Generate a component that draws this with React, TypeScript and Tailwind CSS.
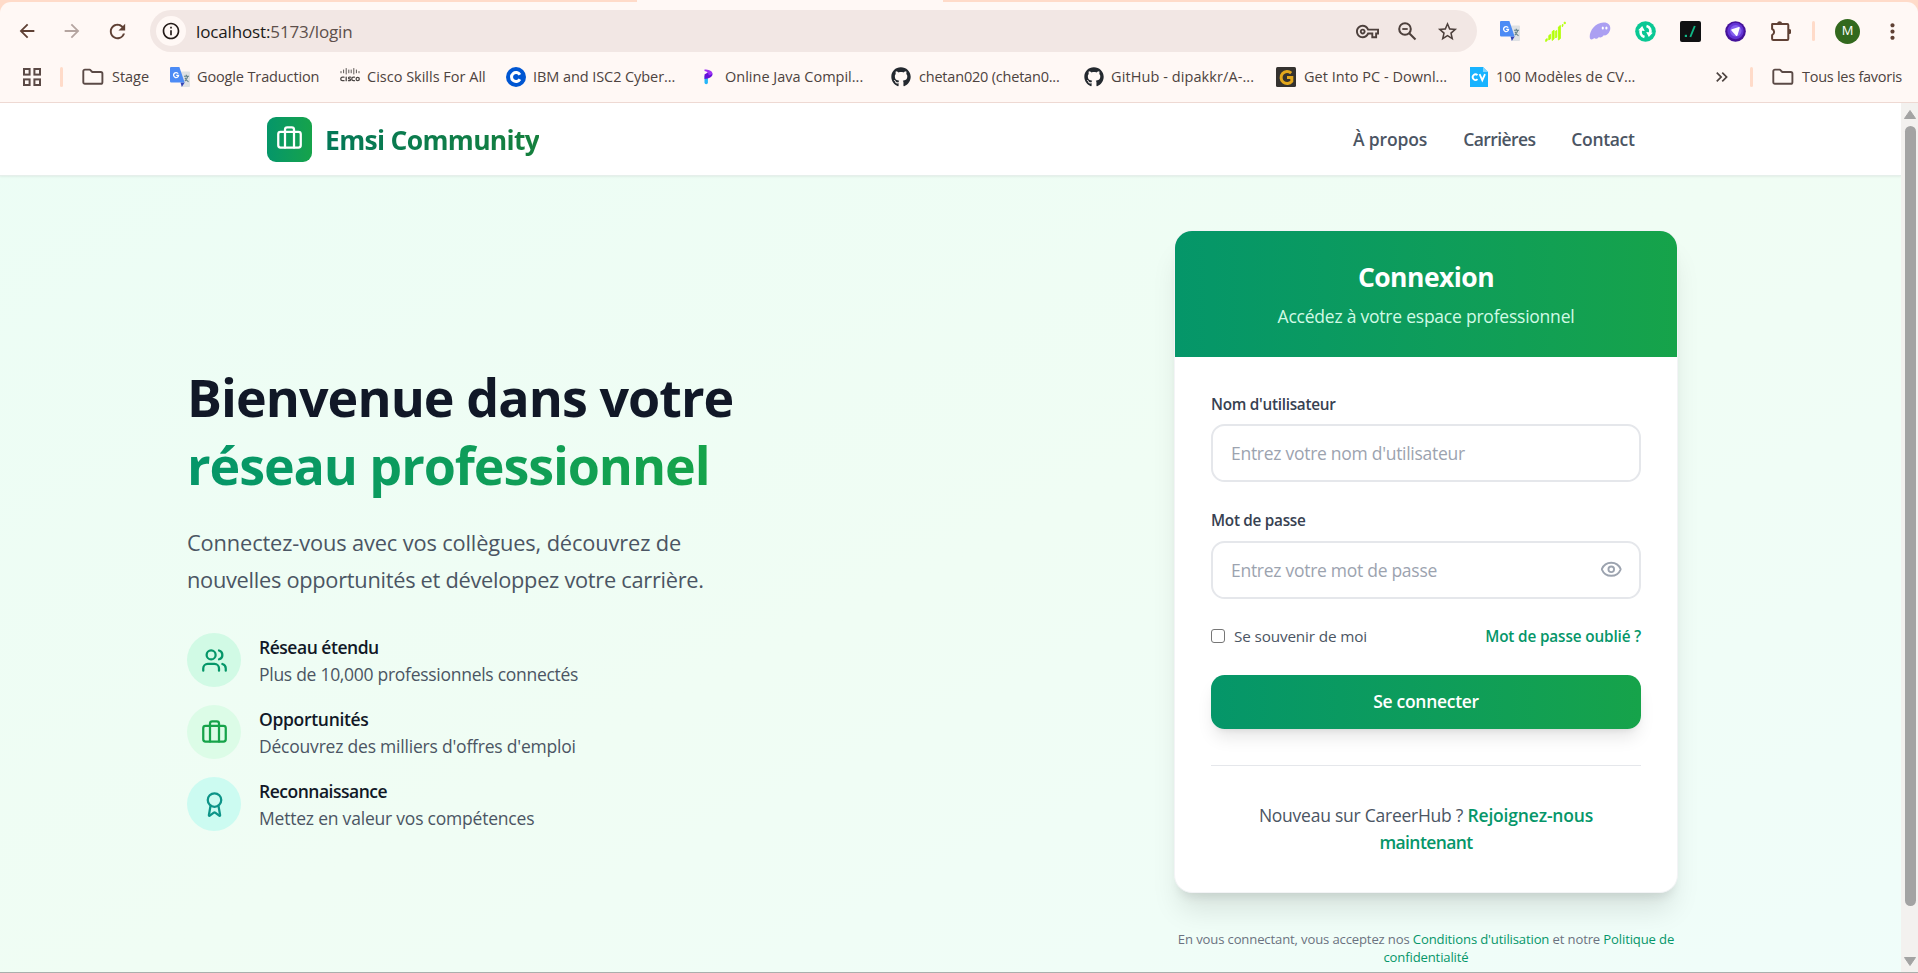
import type { ReactNode } from "react";
import { Award, Eye, Users } from "lucide-react";
import { FaGithub } from "react-icons/fa";
import {
  MdArrowBack,
  MdArrowForward,
  MdInfoOutline,
  MdKeyboardDoubleArrowRight,
  MdMoreVert,
  MdOutlineVpnKey,
  MdRefresh,
  MdStarOutline,
} from "react-icons/md";

const BriefcaseIcon = ({ className }: { className: string }) => (
  <svg viewBox="0 0 24 24" fill="none" stroke="currentColor" strokeWidth="2" strokeLinecap="round" strokeLinejoin="round" className={className}>
    <rect x="2" y="6" width="20" height="14" rx="2" />
    <path d="M16 20V4a2 2 0 0 0-2-2h-4a2 2 0 0 0-2 2v16" />
  </svg>
);

const FolderIcon = () => (
  <svg viewBox="0 0 22 18" className="h-[18px] w-[22px]" fill="none" stroke="#5b4a46" strokeWidth="1.9" strokeLinejoin="round">
    <path d="M1.3 14.2V3.2a1.6 1.6 0 0 1 1.6-1.6h5l2.4 2.4h8.5a1.6 1.6 0 0 1 1.6 1.6v8.600a1.600 1.600 0 0 1-1.600 1.600H2.900a1.600 1.600 0 0 1-1.600-1.600z" />
  </svg>
);

const AppsIcon = () => (
  <svg viewBox="0 0 18 18" className="size-[18px]" fill="none" stroke="#5b4a46" strokeWidth="2">
    <rect x="1" y="1" width="5.6" height="5.6" />
    <rect x="11.4" y="1" width="5.6" height="5.6" />
    <rect x="1" y="11.4" width="5.6" height="5.6" />
    <rect x="11.4" y="11.4" width="5.6" height="5.6" />
  </svg>
);

const ZoomOutIcon = () => (
  <svg viewBox="0 0 20 22" className="mt-0.5 h-[22px] w-5" fill="none" stroke="#4d403c" strokeWidth="2">
    <circle cx="8" cy="8" r="5.800" />
    <path d="M12.200 12.200l6.300 6.300" />
    <path d="M5.300 8h5.400" strokeWidth="1.800" />
  </svg>
);

const TranslateIcon = () => (
  <svg viewBox="0 0 20 20" className="size-5">
    <path d="M8 4.500h11a1 1 0 0 1 1 1V19a1 1 0 0 1-1 1h-7z" fill="#dfe1e3" />
    <path d="M10.500 15.500h4.200L11.800 20z" fill="#3344b4" />
    <path d="M1 0h8.400l5.200 15.500H1.200A1.200 1.200 0 0 1 0 14.300V1.200A1.200 1.200 0 0 1 1 0z" fill="#4c8bf5" />
    <path d="M8.200 6.700A2.500 2.500 0 1 0 8.600 8.300H6.200" fill="none" stroke="#fff" strokeWidth="1.300" />
    <path d="M14 9.200h5M16.300 7.800v1.400M17.800 9.200c-.5 2.300-1.700 3.900-3 5M15 10.800c.7 1.800 1.900 3 3.500 4" fill="none" stroke="#5f7f86" strokeWidth="1.100" />
  </svg>
);

const CiscoIcon = () => (
  <svg viewBox="0 0 20 20" className="size-5" fill="none" stroke="#4b4644" strokeLinecap="round">
    <path d="M1 4.500v1.300M3.600 3v2.800M6.200 1.500v5.500M8.800 3v2.800M11.200 3v2.800M13.800 1.500v5.500M16.400 3v2.800M19 4.500v1.300" strokeWidth="0.900" />
    <path d="M4 10.200H2.500a1.700 1.700 0 0 0 0 3.500H4M6.200 10.200v3.500M10.600 10.200H9.200c-.9 0-.9 1.700 0 1.700h.6c.9 0 .9 1.800 0 1.800H8.500M14.500 10.200h-1a1.700 1.700 0 0 0 0 3.500h1" strokeWidth="1.300" />
    <circle cx="17.700" cy="12" r="1.600" strokeWidth="1.300" />
  </svg>
);

const CourseraIcon = () => (
  <svg viewBox="0 0 20 20" className="size-5">
    <circle cx="10" cy="10" r="10" fill="#0056d2" />
    <path d="M13.900 12.300a4.500 4.500 0 1 1 0-4.600" fill="none" stroke="#fff" strokeWidth="3" />
  </svg>
);

const CompilerIcon = () => (
  <svg viewBox="0 0 20 20" className="size-5">
    <path d="M6.500 9l3.400-1.500v8.100a1.600 1.600 0 0 1-3.400 0z" fill="#25b5f8" />
    <path d="M6.500 7.500l4-2.500 4 1.700c0 3.500-3.400 4.800-8 5.300z" fill="#6610d8" />
    <path d="M6.500 2.500c3.800 0 8 1 8 4.500l-3.700 1.500c0-2.200-1.600-4-4.300-4.500z" fill="#a033f5" />
  </svg>
);

const GetIntoIcon = () => (
  <svg viewBox="0 0 20 20" className="size-5">
    <rect width="20" height="20" rx="1.500" fill="#35322f" />
    <path d="M15.200 6.200A6 6 0 1 0 15.800 14.300v-3.900h-4.800" fill="none" stroke="#e3a71c" strokeWidth="3" />
  </svg>
);

const CvIcon = () => (
  <svg viewBox="0 0 20 20" className="size-5">
    <path d="M1 0h13l5 5v15H1z" fill="#18b3ff" />
    <path d="M14 0l5 5h-5z" fill="#7fd6ff" />
    <path d="M8.500 8.200a2.800 2.800 0 1 0 0 4M10.600 7.200l2.700 6 2.700-6" fill="none" stroke="#fff" strokeWidth="1.800" />
  </svg>
);

const ChartExtension = () => (
  <svg viewBox="0 0 21 21" className="size-[21px]" fill="#b4ff0a" stroke="#b4ff0a" strokeLinejoin="round">
    <path d="M.7 18.600l1.500-1v2l-1.500 1z" strokeWidth="0.900" />
    <path d="M3.800 14.500l1.800-1.200v4.500L3.800 19z" strokeWidth="0.900" />
    <path d="M7.200 10.500l1.900-1.200v8.500l-1.900 1.700z" strokeWidth="0.900" />
    <path d="M10.700 10l1-.5v6.500l-1 1z" strokeWidth="0.900" />
    <path d="M13.400 6l2-1.600v13.100l-2 1.500z" strokeWidth="0.900" />
    <path d="M17.200 3.800l.8-.6v2l-.8.6z" strokeWidth="0.800" />
    <circle cx="19.800" cy="1.900" r="1" strokeWidth="0.500" />
  </svg>
);

const GhostExtension = () => (
  <svg viewBox="0 0 22 18" className="h-[18px] w-[22px]">
    <path d="M1 16.500C-.6 11 5 1 14.500.600 20.500.400 22.400 5 20.700 9c-1.300 3.300-4.200 5-6 4.300-1.300 2-3.400 2.800-4.700 1.600-1.700 2.200-4 2.300-4.700 1.100-1.300 1.400-3.500 2-4.300.5z" fill="#ab9ff2" />
    <ellipse cx="13.800" cy="6" rx="1.100" ry="1.600" fill="#fff" />
    <ellipse cx="17.400" cy="6" rx="1.100" ry="1.600" fill="#fff" />
  </svg>
);

const SyncExtension = () => (
  <svg viewBox="0 0 21 21" className="size-[21px]">
    <circle cx="10.500" cy="10.500" r="10.300" fill="#0ac894" />
    <path d="M9.500 16C6 15 4.800 12 6 8.500M11.500 5c3.500 1 4.700 4 3.500 7.500" fill="none" stroke="#fff" strokeWidth="2.600" />
    <path d="M3.200 9.300L7.200 5l2.600 5zM17.800 11.700l-4 4.300-2.600-5z" fill="#fff" />
  </svg>
);

const SlashExtension = () => (
  <svg viewBox="0 0 21 21" className="size-[21px]">
    <rect width="21" height="21" rx="2" fill="#101112" />
    <rect x="4.800" y="13.800" width="2.200" height="2.200" fill="#11b886" />
    <path d="M10.300 16l4.500-11" stroke="#11b886" strokeWidth="1.900" />
  </svg>
);

const PurpleExtension = () => (
  <svg viewBox="0 0 21 21" className="size-[21px]">
    <circle cx="10.500" cy="10.500" r="10.300" fill="#451299" />
    <circle cx="10.500" cy="10" r="8.200" fill="#6334d4" />
    <circle cx="10.800" cy="9.800" r="5.800" fill="#8560ee" />
    <path d="M6.800 8.200l7-2.100c.8-.2 1 .2.900.9l-2.200 7.200c-.3.900-1.200.9-1.700.2L6.400 9.500c-.4-.6-.2-1.100.4-1.300z" fill="#fff" />
  </svg>
);

const PuzzleIcon = () => (
  <svg viewBox="0 0 22 22" className="size-[22px]">
    <path d="M3.300 4h15a1 1 0 0 1 1 1v14a1 1 0 0 1-1 1h-14a1.200 1.200 0 0 1-1.200-1.200v-3.600a3.400 3.400 0 0 0 0-6.200V4.200z" fill="none" stroke="#5f4034" strokeWidth="2" strokeLinejoin="round" />
    <path d="M8 3.300a2.700 2.700 0 0 1 5.200 0zM19.800 8.900a2.600 2.600 0 0 1 0 5.200z" fill="#5f4034" />
  </svg>
);

const extensions = [TranslateIcon, ChartExtension, GhostExtension, SyncExtension, SlashExtension, PurpleExtension, PuzzleIcon];

const bookmarks: { label: string; icon: ReactNode; box: string; text: string }[] = [
  { label: "Stage", icon: <FolderIcon />, box: "w-[88px] gap-2", text: "tracking-[-0.003em]" },
  { label: "Google Traduction", icon: <TranslateIcon />, box: "w-[170px] gap-[7px]", text: "tracking-[-0.009em]" },
  { label: "Cisco Skills For All", icon: <CiscoIcon />, box: "w-[166px] gap-[7px]", text: "tracking-[0em]" },
  { label: "IBM and ISC2 Cyber...", icon: <CourseraIcon />, box: "w-[192px] gap-[7px]", text: "tracking-[-0.005em]" },
  { label: "Online Java Compil...", icon: <CompilerIcon />, box: "w-[193px] gap-[7px]", text: "tracking-[0em]" },
  { label: "chetan020 (chetan0...", icon: <FaGithub className="size-5 text-[#24292f]" />, box: "w-[193px] gap-2", text: "tracking-[-0.014em]" },
  { label: "GitHub - dipakkr/A-...", icon: <FaGithub className="size-5 text-[#24292f]" />, box: "w-[192px] gap-[7px]", text: "tracking-[0.006em]" },
  { label: "Get Into PC - Downl...", icon: <GetIntoIcon />, box: "w-[193px] gap-2", text: "tracking-[0.001em]" },
  { label: "100 Modèles de CV...", icon: <CvIcon />, box: "w-[247px] gap-[7px]", text: "tracking-[-0.002em]" },
];

function BrowserChrome() {
  return (
    <div className="relative h-[103px] shrink-0 bg-[#ffdbc9]">
      <div className="absolute left-[637px] top-0 h-[2px] w-[306px] bg-[#fff8f5]" />
      <div className="h-[2px]" />
      <div className="h-[101px] rounded-t-[11px] border-b border-[#eed9d3] bg-[#fff8f5] pt-2">
        <div className="flex h-[42px] items-center pl-[4.5px] text-[#5f4034]">
          <div className="flex w-[45px] justify-center"><MdArrowBack className="size-[22px]" /></div>
          <div className="flex w-[45px] justify-center text-[#b5a5a0]"><MdArrowForward className="size-[22px]" /></div>
          <div className="flex w-[45px] justify-center"><MdRefresh className="size-[23px]" /></div>
          <div className="ml-[10.5px] flex h-[42px] w-[1327px] items-center rounded-full bg-[#f2e7e4] pl-1.5 pr-2.5 text-[#4d403c]">
            <div className="flex size-[30px] items-center justify-center rounded-full bg-[#fff8f5]">
              <MdInfoOutline className="size-5 text-[#231a17]" />
            </div>
            <div className="ml-2.5 mt-0.5 flex-1 text-[17px] leading-6 tracking-[-0.008em] text-[#5d4f4b]">
              <span className="text-[#201a18]">localhost:</span>5173/login
            </div>
            <div className="flex w-10 justify-center"><MdOutlineVpnKey className="size-[23px]" /></div>
            <div className="flex w-10 justify-center"><ZoomOutIcon /></div>
            <div className="flex w-10 justify-center"><MdStarOutline className="size-[23px]" /></div>
          </div>
          <div className="ml-[10.5px] flex">
            {extensions.map((Icon, i) => (
              <div key={i} className="flex w-[45px] items-center justify-center"><Icon /></div>
            ))}
          </div>
          <div className="ml-[9.5px] h-5 w-[3px] rounded-full bg-[#ffdbc9]" />
          <div className="ml-5 flex size-[25px] items-center justify-center rounded-full bg-[#33691e] text-[13px] text-white">M</div>
          <div className="ml-[9.5px] flex w-[45px] justify-center"><MdMoreVert className="size-[25px]" /></div>
        </div>
        <div className="flex h-[50px] items-center pl-[23px] text-[14.5px] leading-5 text-[#4d4340]">
          <AppsIcon />
          <div className="ml-[19px] mr-[19px] h-5 w-[3px] rounded-full bg-[#ffdbc9]" />
          {bookmarks.map((b) => (
            <div key={b.label} className={`flex shrink-0 items-center whitespace-nowrap ${b.box}`}>
              {b.icon}
              <span className={`-mt-px ${b.text}`}>{b.label}</span>
            </div>
          ))}
          <MdKeyboardDoubleArrowRight className="-ml-[4px] size-[20px]" />
          <div className="ml-[18px] h-5 w-[3px] rounded-full bg-[#ffdbc9]" />
          <div className="ml-[19px] flex items-center gap-[8px] whitespace-nowrap">
            <FolderIcon />
            <span className="-mt-px tracking-[-0.018em]">Tous les favoris</span>
          </div>
        </div>
      </div>
    </div>
  );
}

const features = [
  { title: "Réseau étendu", text: "Plus de 10,000 professionnels connectés", icon: <Users className="size-[27px]" />, tone: "bg-[#d1fae5] text-[#059669]", titleTracking: "tracking-[-0.027em]", textTracking: "tracking-[-0.016em]" },
  { title: "Opportunités", text: "Découvrez des milliers d'offres d'emploi", icon: <BriefcaseIcon className="size-[27px]" />, tone: "bg-[#dcfce7] text-[#16a34a]", titleTracking: "tracking-[-0.018em]", textTracking: "tracking-[-0.012em]" },
  { title: "Reconnaissance", text: "Mettez en valeur vos compétences", icon: <Award className="size-[27px]" />, tone: "bg-[#ccfbf1] text-[#0d9488]", titleTracking: "tracking-[-0.028em]", textTracking: "tracking-[-0.012em]" },
];

function Hero() {
  return (
    <section className="w-[560px] pt-[187px]">
      <h1 className="whitespace-nowrap text-[52px] font-bold leading-[68px] tracking-[-0.018em] text-[#111827]">
        Bienvenue dans votre
        <span className="block w-fit bg-gradient-to-r from-[#059669] to-[#16a34a] bg-clip-text tracking-[-0.021em] text-transparent">
          réseau professionnel
        </span>
      </h1>
      <p className="mt-[26px] whitespace-nowrap text-[21.8px] leading-[36.5px] tracking-[-0.013em] text-[#4b5563]">
        <span className="tracking-[-0.006em]">Connectez-vous avec vos collègues, découvrez de</span>
        <br />
        nouvelles opportunités et développez votre carrière.
      </p>
      <ul className="mt-[35px] flex flex-col gap-[18px]">
        {features.map((f) => (
          <li key={f.title} className="flex h-[54px] items-center gap-[18px]">
            <div className={`flex size-[54px] items-center justify-center rounded-full ${f.tone}`}>{f.icon}</div>
            <div className="pt-px text-[17.5px] leading-[27px]">
              <h3 className={`font-semibold text-[#111827] ${f.titleTracking}`}>{f.title}</h3>
              <p className={`text-[#4b5563] ${f.textTracking}`}>{f.text}</p>
            </div>
          </li>
        ))}
      </ul>
    </section>
  );
}

const inputClass =
  "block h-[58px] w-full rounded-[13.5px] border-2 border-[#e5e7eb] bg-white px-[18px] text-[17.5px] tracking-[-0.016em] placeholder:text-[#9ca3af] outline-none";
const labelClass = "mb-[9px] block text-[15.3px] font-semibold leading-[22.5px] tracking-[-0.018em] text-[#374151]";

function LoginCard() {
  return (
    <section className="w-[504px] pt-[54px]">
      <div className="overflow-hidden rounded-[18px] border border-[#f3f4f6] bg-white shadow-[0_22.5px_28px_-5.6px_rgba(0,0,0,0.1),0_9px_11px_-6.75px_rgba(0,0,0,0.1)]">
        <div className="bg-gradient-to-r from-[#059669] to-[#16a34a] pb-[27px] pt-7 text-center">
          <h2 className="text-[26.500px] font-bold leading-[36px] tracking-[-0.02em] text-white">Connexion</h2>
          <p className="mt-2 text-[17.5px] leading-[27px] tracking-[-0.013em] text-[#d1fae5]">Accédez à votre espace professionnel</p>
        </div>
        <form className="px-9 pb-9 pt-[35.5px]">
          <label htmlFor="user" className={labelClass}>Nom d'utilisateur</label>
          <input id="user" placeholder="Entrez votre nom d'utilisateur" className={inputClass} />
          <label htmlFor="pass" className={`mt-[27px] ${labelClass}`}>Mot de passe</label>
          <div className="relative">
            <input id="pass" type="password" placeholder="Entrez votre mot de passe" className={inputClass} />
            <Eye className="absolute right-[18.5px] top-[17.5px] size-[22.5px] text-[#9ca3af]" />
          </div>
          <div className="mt-[26.5px] flex h-[22.5px] items-center justify-between text-[15.3px]">
            <label className="flex items-center gap-[9px] tracking-[-0.01em] text-[#4b5563]">
              <input type="checkbox" className="size-[14px] appearance-none rounded-[3px] border border-[#767676] bg-white" />
              Se souvenir de moi
            </label>
            <a className="font-semibold tracking-[-0.009em] text-[#059669]">Mot de passe oublié ?</a>
          </div>
          <button type="button" className="mt-[27px] h-[54px] w-full rounded-[13.5px] bg-gradient-to-r from-[#059669] to-[#16a34a] text-[17.5px] font-semibold tracking-[-0.017em] text-white shadow-[0_11px_17px_-3px_rgba(0,0,0,0.1),0_4px_7px_-4px_rgba(0,0,0,0.1)]">
            Se connecter
          </button>
          <div className="mt-9 border-t border-[#e5e7eb] pt-9 text-center text-[17.5px] leading-[27px] tracking-[-0.014em] text-[#4b5563]">
            Nouveau sur CareerHub ?{" "}
            <a className="font-semibold tracking-[-0.01em] text-[#059669]">Rejoignez-nous</a>
            <br />
            <a className="font-semibold tracking-[-0.035em] text-[#059669]">maintenant</a>
          </div>
        </form>
      </div>
      <p className="mt-[37px] whitespace-nowrap text-center text-[13.1px] leading-[18px] tracking-[-0.011em] text-[#6b7280]">
        En vous connectant, vous acceptez nos <a className="text-[#059669]">Conditions d'utilisation</a> et notre{" "}
        <a className="text-[#059669]">Politique de</a>
        <br />
        <a className="text-[#059669]">confidentialité</a>
      </p>
    </section>
  );
}

function Scrollbar() {
  return (
    <div className="flex w-[17px] flex-col items-center bg-[#f3f1ef] pl-px pt-[7px]">
      <svg viewBox="0 0 12 9" className="h-[9px] w-3"><path d="M6 .5L11.500 8.500H.5z" fill="#a3a3a3" stroke="#a3a3a3" strokeLinejoin="round" /></svg>
      <div className="mt-[7px] h-[780px] w-[11px] rounded-full bg-[#a3a3a3]" />
      <svg viewBox="0 0 12 9" className="mt-[51px] h-[9px] w-3"><path d="M6 8.500L11.500.5H.5z" fill="#a3a3a3" stroke="#a3a3a3" strokeLinejoin="round" /></svg>
    </div>
  );
}

export default function App() {
  return (
    <div className="flex h-[973px] w-[1918px] flex-col overflow-hidden font-['Open_Sans','Noto_Sans',sans-serif]">
      <BrowserChrome />
      <div className="flex h-[870px] border-b border-[#a9afac]">
        <div className="h-full w-[1901px] overflow-hidden">
          <div className="h-[932px] bg-gradient-to-br from-[#ecfdf5] via-[#f0fdf4] to-[#f0fdfa]">
            <header className="flex h-[73px] items-center border-b border-[#e6efeb] bg-white pl-[267px] shadow-[0_1px_2px_rgba(0,0,0,0.06)]">
              <div className="flex w-[1086px] items-center gap-[13px]">
                <div className="flex size-[45px] items-center justify-center rounded-[9px] bg-gradient-to-r from-[#059669] to-[#16a34a] text-white">
                  <BriefcaseIcon className="mb-px size-[27px]" />
                </div>
                <span className="mt-px bg-gradient-to-r from-[#047857] to-[#15803d] bg-clip-text text-[26.500px] font-bold leading-9 tracking-[-0.026em] text-transparent">
                  Emsi Community
                </span>
              </div>
              <nav className="flex gap-9 text-[17.5px] font-semibold text-[#4b5563]">
                <a className="tracking-[-0.008em]">À propos</a>
                <a className="tracking-[-0.034em]">Carrières</a>
                <a className="tracking-[-0.02em]">Contact</a>
              </nav>
            </header>
            <main className="flex justify-between pl-[187px] pr-[223px]">
              <Hero />
              <LoginCard />
            </main>
          </div>
        </div>
        <Scrollbar />
      </div>
    </div>
  );
}
